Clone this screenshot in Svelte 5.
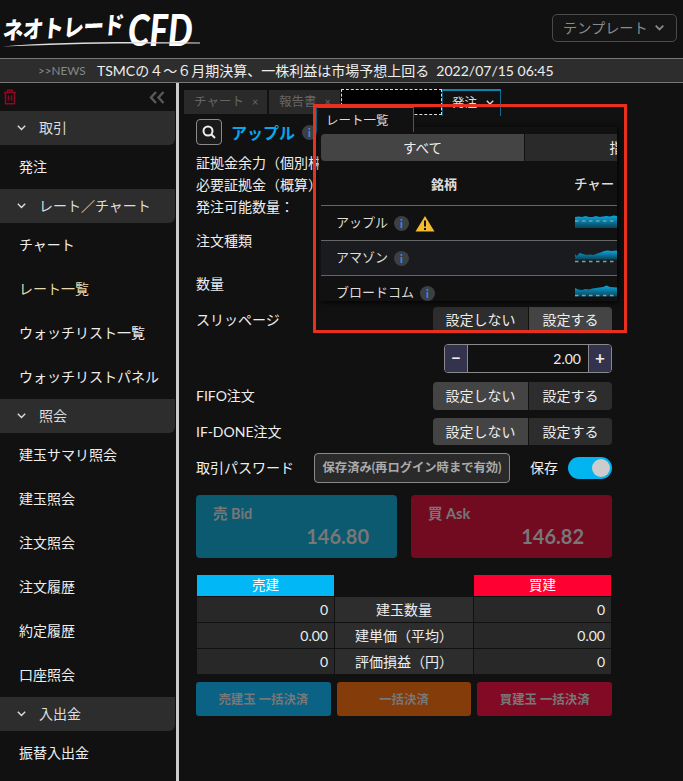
<script lang="ts">
  // Order screen of the CFD dashboard, with the rate list window floating over it.
  const nav = [
    { title: "取引", items: ["発注"] },
    { title: "レート／チャート", items: ["チャート", "レート一覧", "ウォッチリスト一覧", "ウォッチリストパネル"] },
    { title: "照会", items: ["建玉サマリ照会", "建玉照会", "注文照会", "注文履歴", "約定履歴", "口座照会"] },
    { title: "入出金", items: ["振替入出金"] },
  ];

  // spark: area outline, dash: y of the dashed reference line (svg is 72 x 18 units)
  const rates = [
    { name: "アップル", warn: true, dash: 7, spark: "0,3 6,2.500 12,3 18,2 24,3 30,3 36,2 42,3 48,2.500 54,2 60,2.500 66,1.500 72,2 72,14 0,14" },
    { name: "アマゾン", warn: false, dash: 12.500, spark: "0,5 3,7 8,4 14,5 20,6 26,5.500 32,6 38,4.500 44,3.500 50,2 56,1.500 62,2 72,1.500 72,10.500 0,10.500" },
    { name: "ブロードコム", warn: false, dash: 11.500, spark: "0,4 6,5.500 12,6 18,5 24,5.500 30,4.500 36,4 42,3.500 48,3 54,1.500 60,3 72,3.500 72,12.500 0,12.500" },
  ];

  const position = [
    { label: "建玉数量", sell: "0", buy: "0" },
    { label: "建単価（平均）", sell: "0.00", buy: "0.00" },
    { label: "評価損益（円）", sell: "0", buy: "0" },
  ];
</script>

<div class="page">
  <header class="top">
    <div class="logo">
      <span class="logo-kana">ネオトレード</span><span class="logo-cfd">CFD</span>
      <svg class="swoosh" width="200" height="12" viewBox="0 0 200 12">
        <path d="M1 10.500 C40 7 90 6 130 6 L199 6.500 L199 7.500 L130 7.500 C90 7.500 40 9 1 10.500Z" fill="#ddd" />
      </svg>
    </div>
    <button class="template" type="button">
      <span>テンプレート</span>
      <svg width="9" height="6" viewBox="0 0 9 6"><path d="M.7.7l3.800 3.800L8.300.7" fill="none" stroke="#888" stroke-width="1.800" /></svg>
    </button>
  </header>

  <div class="news">
    <span class="news-tag">&gt;&gt;NEWS</span>
    <span class="news-text">TSMCの４～６月期決算、一株利益は市場予想上回る&nbsp; 2022/07/15 06:45</span>
  </div>

  <div class="body">
    <aside class="side">
      <div class="side-tools">
        <svg width="14" height="16" viewBox="0 0 14 16" fill="none" stroke="#8a0a25" stroke-width="1.500">
          <path d="M1 3.500h12M4.500 3.500V1.200h5v2.300M2.500 3.500v11.200h9V3.500M5.500 6.500v5M8.500 6.500v5" />
        </svg>
        <svg width="16" height="13" viewBox="0 0 16 13" fill="none" stroke="#595959" stroke-width="2.400">
          <path d="M7 1L2 6.500 7 12M14.500 1L9.500 6.500l5 5.500" />
        </svg>
      </div>
      {#each nav as group}
        <div class="group">
          <svg width="9" height="6" viewBox="0 0 9 6"><path d="M.8.8l3.700 3.700L8.200.8" fill="none" stroke="#ddd" stroke-width="1.400" /></svg>
          <span>{group.title}</span>
        </div>
        {#each group.items as item}
          <div class="item" class:on={item === "レート一覧"}>{item}</div>
        {/each}
      {/each}
    </aside>

    <main class="main">
      <div class="tabs">
        <div class="tab">チャート<i>×</i></div>
        <div class="tab short">報告書<i>×</i></div>
        <div class="drop"></div>
        <div class="tab-on">
          発注
          <svg width="8" height="5" viewBox="0 0 8 5"><path d="M.8.8L4 4 7.200.8" fill="none" stroke="#ddd" stroke-width="1.300" /></svg>
        </div>
      </div>

      <div class="form">
        <div class="stock">
          <button class="search" type="button" aria-label="検索">
            <svg width="14" height="14" viewBox="0 0 14 14" fill="none" stroke="#eee" stroke-width="2"><circle cx="6" cy="6" r="4.500" /><path d="M9.500 9.500L13 13" /></svg>
          </button>
          <span class="stock-name">アップル</span>
          <span class="info">i</span>
        </div>

        <div class="facts">
          <div>証拠金余力（個別株）</div>
          <div>必要証拠金（概算）</div>
          <div>発注可能数量：</div>
        </div>

        <div class="row r-type"><span>注文種類</span></div>
        <div class="row r-qty"><span>数量</span></div>

        <div class="row r-slip">
          <span>スリッページ</span>
          <div class="seg"><span class="no">設定しない</span><span class="yes sel">設定する</span></div>
        </div>

        <div class="stepper">
          <span class="step">−</span>
          <span class="step-val">2.00</span>
          <span class="step">+</span>
        </div>

        <div class="row r-fifo">
          <span>FIFO注文</span>
          <div class="seg"><span class="no sel">設定しない</span><span class="yes">設定する</span></div>
        </div>
        <div class="row r-done">
          <span>IF-DONE注文</span>
          <div class="seg"><span class="no sel">設定しない</span><span class="yes">設定する</span></div>
        </div>

        <div class="row r-pw">
          <span class="pw-label">取引パスワード</span>
          <button class="pw" type="button">保存済み(再ログイン時まで有効)</button>
          <span class="save">保存</span>
          <span class="toggle"><b></b></span>
        </div>

        <div class="quotes">
          <div class="quote bid"><span>売 Bid</span><strong>146.80</strong></div>
          <div class="quote ask"><span>買 Ask</span><strong>146.82</strong></div>
        </div>

        <div class="pos">
          <div class="pos-head sell">売建</div>
          <div></div>
          <div class="pos-head buy">買建</div>
          {#each position as p}
            <div class="num">{p.sell}</div>
            <div class="mid">{p.label}</div>
            <div class="num">{p.buy}</div>
          {/each}
        </div>

        <div class="settle">
          <button class="close-sell" type="button">売建玉 一括決済</button>
          <button class="close-all" type="button">一括決済</button>
          <button class="close-buy" type="button">買建玉 一括決済</button>
        </div>
      </div>
    </main>
  </div>

  <!-- floating rate list window -->
  <div class="float-tab">レート一覧</div>
  <section class="float">
    <div class="float-seg">
      <span class="sel">すべて</span>
      <span class="other">指数</span>
    </div>
    <div class="float-head">
      <span class="col-name">銘柄</span>
      <span class="col-chart">チャート</span>
    </div>
    {#each rates as r, i}
      <div class="rate" class:alt={i === 1}>
        <div class="rate-name">
          <span>{r.name}</span>
          <span class="info small">i</span>
          {#if r.warn}
            <svg class="warn" width="20" height="17" viewBox="0 0 20 17">
              <path d="M10 1L19.500 16.500H.5Z" fill="#f2bb30" />
              <path d="M10 5.500v6M10 13v2" stroke="#111" stroke-width="2" />
            </svg>
          {/if}
        </div>
        <svg class="spark" width="42" height="18" viewBox="0 0 72 18" preserveAspectRatio="none">
          <defs>
            <linearGradient id="sp{i}" x1="0" y1="0" x2="0" y2="1">
              <stop offset="0" stop-color="#08a8e0" />
              <stop offset="1" stop-color="#0c4257" />
            </linearGradient>
          </defs>
          <polygon points={r.spark} fill="url(#sp{i})" />
          <path d="M0 {r.dash}H72" stroke="#6aa6b8" stroke-width="1.500" stroke-dasharray="6 6" />
        </svg>
      </div>
    {/each}
  </section>

  <div class="callout"></div>
</div>

<style>
  :global(body) {
    background: #111;
    color: #eee;
    font-family: Lato, "Noto Sans CJK JP", sans-serif;
    font-size: 14px;
  }
  button { font-family: inherit; cursor: pointer; }

  .page { position: relative; width: 683px; height: 781px; overflow: hidden; background: #111; }

  .top { height: 58px; display: flex; justify-content: space-between; align-items: flex-start; padding: 14px 6px 0 3px; box-sizing: border-box; }
  .logo { position: relative; display: flex; align-items: center; height: 24px; color: #fff; }
  .logo-kana { font-family: "Noto Sans CJK JP", sans-serif; font-weight: 900; font-size: 20.500px; letter-spacing: -.3px; transform: rotate(-3deg) skewX(-8deg) scaleY(1.150); }
  .logo-cfd { display: inline-block; width: 68px; margin: 5px 0 0 4px; font-family: Lato, sans-serif; font-weight: 900; font-style: italic; font-size: 44px; line-height: 32px; transform-origin: left center; transform: scaleX(.79); }
  .swoosh { position: absolute; left: -2px; top: 22px; }
  .template {
    width: 125px; height: 28px; padding: 0 0 0 10px; background: #151515; border: 1px solid #4a4a4a; border-radius: 5px;
    color: #8a8a8a; font-size: 14.200px; display: flex; align-items: center; gap: 7px;
  }
  .template span { padding-bottom: 2px; }

  .news { height: 25px; box-sizing: border-box; border-top: 1px solid #777; border-bottom: 1px solid #777; background: #2d2d2d; display: flex; align-items: center; padding: 0 0 1px 38px; }
  .news-tag { color: #888; font-size: 11.700px; width: 59px; }
  .news-text { color: #eee; font-size: 14px; white-space: pre; }

  .body { display: flex; height: 698px; }
  .side { width: 176px; flex: none; border-right: 3px solid #ccc; overflow: hidden; }
  .side-tools { height: 28px; display: flex; justify-content: space-between; align-items: center; padding: 0 11px 0 3px; }
  .group { width: 175px; height: 34px; box-sizing: border-box; background: #2d2d2d; border-radius: 0 0 6px 0; display: flex; align-items: center; padding: 0 0 2px 17px; gap: 13px; color: #ddd; }
  .group svg { margin-top: 2px; }
  .item { height: 44px; line-height: 44px; padding-left: 19px; color: #eee; }
  .item.on { color: #e8d9a8; }

  .main { flex: 1; min-width: 0; padding-top: 2px; }
  .tabs { display: flex; align-items: center; height: 34px; padding-left: 5px; gap: 2px; }
  .tab { width: 83px; height: 24px; box-sizing: border-box; background: #2a2a2a; color: #666; font-size: 12.500px; line-height: 24px; padding-left: 10px; display: flex; gap: 8px; }
  .tab.short { width: 71px; }
  .tab i { font-style: normal; font-size: 11px; }
  .drop { width: 101px; height: 26px; box-sizing: border-box; margin-left: -1px; margin-right: -2px; background: #000; border: 1px dashed #ddd; }
  .tab-on { width: 59px; height: 27px; box-sizing: border-box; border-top: 2px solid #0a86b4; border-left: 1px solid #0a5a78; border-right: 1px solid #0a6d92; padding-left: 9px; color: #ddd; font-size: 12.500px; line-height: 24px; display: flex; align-items: flex-start; gap: 9px; }
  .tab-on svg { margin-top: 9px; }

  .form { width: 416px; margin-left: 17px; }
  .stock { display: flex; align-items: center; height: 26px; }
  .search { width: 26px; height: 26px; padding: 0; box-sizing: border-box; background: #1a1a1a; border: 1px solid #8a8a8a; border-radius: 4px; display: flex; align-items: center; justify-content: center; }
  .stock-name { color: #0aa5ee; font-weight: 700; font-size: 16px; margin-left: 9px; }
  .info { width: 15px; height: 15px; flex: none; border-radius: 50%; background: #3c3f44; color: #2f8fe0; font-size: 11px; font-weight: 900; line-height: 15px; text-align: center; margin-left: 7px; }

  .facts { margin-top: 7px; line-height: 22px; white-space: nowrap; }

  .row { display: flex; align-items: center; justify-content: space-between; }
  .row > span:first-child { padding-bottom: 2px; }
  .r-type { height: 34px; margin-top: 6px; }
  .r-qty { height: 34px; margin-top: 9px; }
  .r-slip { height: 26px; margin-top: 6px; }
  .r-fifo { height: 28px; margin-top: 9px; }
  .r-done { height: 27px; margin-top: 8px; }
  .r-pw { height: 30px; margin-top: 8px; justify-content: flex-start; }

  .seg { width: 179px; height: 100%; display: flex; border-radius: 4px; overflow: hidden; font-size: 14px; gap: 1px; color: #eee; }
  .seg span { display: flex; align-items: center; justify-content: center; background: #2d2d2d; padding-bottom: 2px; box-sizing: border-box; }
  .seg .no { width: 95px; }
  .seg .yes { flex: 1; }
  .seg .sel { background: #444; }

  .stepper { width: 168px; height: 29px; box-sizing: border-box; margin: 11px 0 0 248px; display: flex; border: 1px solid #8a8a8a; border-radius: 4px; overflow: hidden; background: #111; }
  .step { width: 22px; background: #33334d; color: #eee; font-size: 17px; font-weight: 700; line-height: 25px; text-align: center; }
  .step-val { flex: 1; border-left: 1px solid #8a8a8a; border-right: 1px solid #8a8a8a; text-align: right; line-height: 27px; padding-right: 7px; font-size: 14px; }

  .pw-label { width: 118px; flex: none; }
  .pw { width: 196px; height: 30px; flex: none; padding: 0 0 2px; background: #2a2a2a; border: 1px solid #8a8a8a; border-radius: 4px; color: #aaa; font-size: 12.300px; font-weight: 700; white-space: nowrap; }
  .save { margin-left: 20px; padding-bottom: 2px; white-space: nowrap; flex: none; }
  .toggle { width: 44px; height: 22px; flex: none; margin-left: 10px; border-radius: 11px; background: #02b4f0; display: flex; justify-content: flex-end; align-items: center; padding-right: 2px; box-sizing: border-box; }
  .toggle b { width: 18px; height: 18px; border-radius: 50%; background: #ccc; }

  .quotes { display: flex; justify-content: space-between; margin-top: 12px; }
  .quote { width: 201px; height: 63px; box-sizing: border-box; border-radius: 4px; padding: 9px 28px 0 17px; color: #777; display: flex; flex-direction: column; }
  .quote span { font-weight: 700; font-size: 14.500px; line-height: 20px; }
  .quote strong { text-align: right; font-size: 20px; line-height: 26px; margin-top: -1px; }
  .bid { background: #0b5a70; }
  .ask { background: #720b20; }

  .pos { display: grid; grid-template-columns: 137px 138px 137px; grid-template-rows: 21px 25px 25px 25px; gap: 1px; margin: 17px 0 0 1px; }
  .pos-head { line-height: 21px; text-align: center; color: #fff; font-size: 13.500px; }
  .sell { background: #02b7f5; }
  .buy { background: #fe0032; }
  .num { background: #282828; text-align: right; padding-right: 6px; line-height: 25px; }
  .mid { background: #2d2d2d; text-align: center; line-height: 25px; }

  .settle { display: flex; gap: 6px; margin-top: 8px; }
  .settle button { flex: 1; height: 34px; padding: 0; border: 0; border-radius: 3px; color: #777; font-size: 12.400px; font-weight: 700; }
  .close-sell { background: #0a6285; }
  .close-all { background: #843c0a; }
  .close-buy { background: #830a25; }

  .float-tab { position: absolute; left: 316px; top: 106px; width: 98px; height: 26px; box-sizing: border-box; background: #111; border-top: 2px solid #0a86b4; border-left: 1px solid #0a5a78; border-right: 1px solid #0a6d92; color: #ddd; font-size: 12.500px; line-height: 25px; padding-left: 9px; z-index: 2; }
  .float { position: absolute; left: 319px; top: 127px; width: 298px; height: 174px; overflow: hidden; background: #111; box-shadow: 1px 1px 6px #000; padding-left: 2px; box-sizing: border-box; z-index: 1; }
  .float-seg { display: flex; gap: 1px; margin-top: 7px; height: 27px; font-size: 13.500px; }
  .float-seg span { width: 203px; flex: none; display: flex; align-items: center; justify-content: center; background: #2a2a2a; padding-bottom: 2px; box-sizing: border-box; }
  .float-seg .sel { background: #444; border-radius: 4px 0 0 4px; }
  .float-seg .other { width: 196px; }
  .float-head { height: 45px; display: flex; align-items: center; border-bottom: 1px solid #666; font-size: 13px; font-weight: 700; color: #ddd; position: relative; white-space: nowrap; box-sizing: border-box; }
  .col-name { margin-left: 110px; }
  .col-chart { position: absolute; left: 253px; font-weight: 500; font-size: 13.500px; }
  .rate { height: 35px; box-sizing: border-box; border-bottom: 1px solid #666; display: flex; align-items: center; justify-content: space-between; }
  .rate.alt { background: #1a1b1e; }
  .rate-name { display: flex; align-items: center; padding-left: 15px; color: #ddd; font-size: 13px; }
  .rate-name > span:first-child { padding-bottom: 3px; }
  .info.small { margin-left: 6px; }
  .warn { margin-left: 6px; }
  .spark { flex: none; }

  .callout { position: absolute; left: 313px; top: 104px; width: 314px; height: 229px; box-sizing: border-box; border: 3px solid #e8301f; pointer-events: none; z-index: 3; }
</style>
